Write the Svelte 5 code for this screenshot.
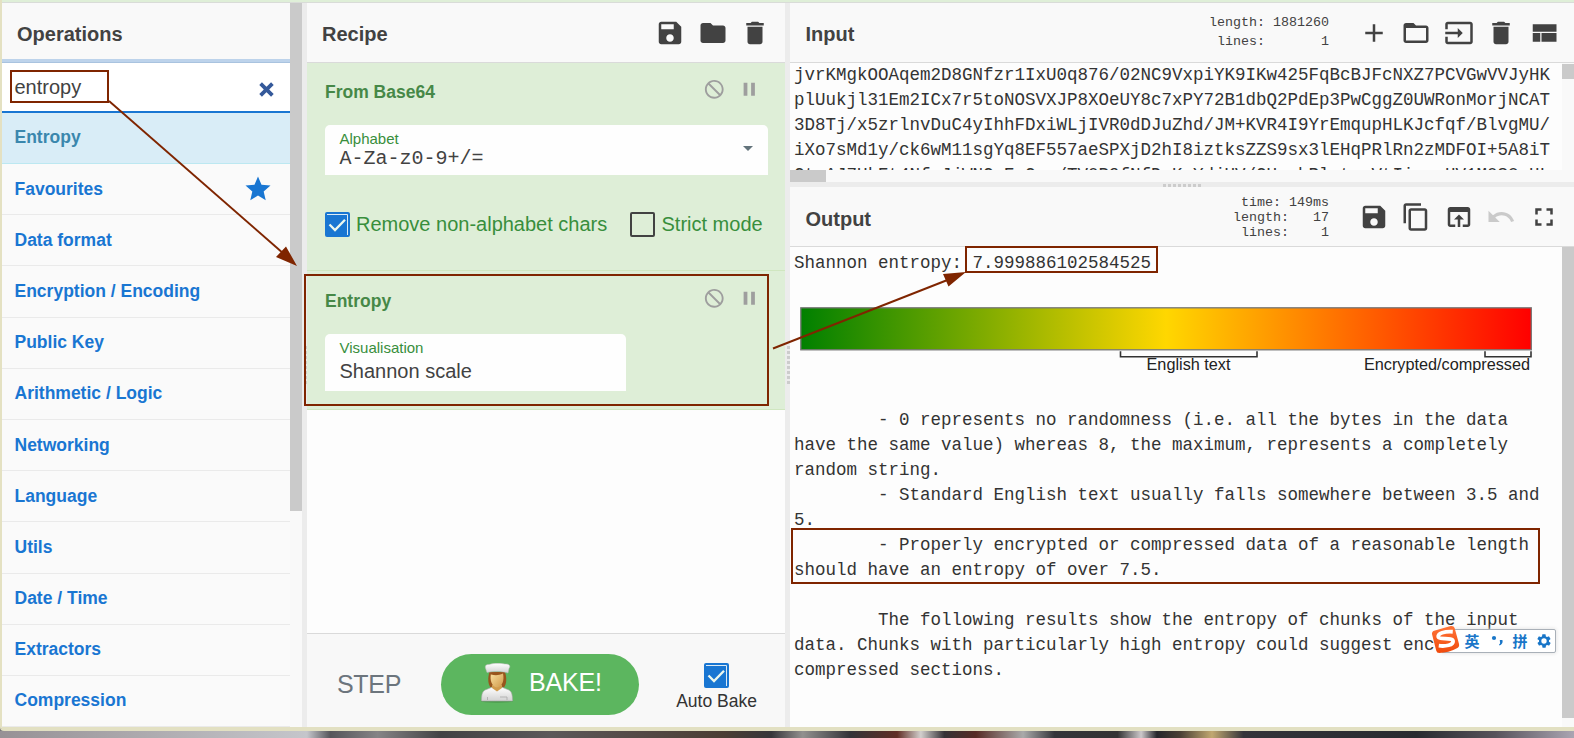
<script>
  const icons = {
    save: 'M17 3H5c-1.11 0-2 .9-2 2v14c0 1.1.89 2 2 2h14c1.1 0 2-.9 2-2V7l-4-4zm-5 16c-1.66 0-3-1.34-3-3s1.34-3 3-3 3 1.34 3 3-1.34 3-3 3zm3-10H5V5h10v4z',
    folder: 'M10 4H4c-1.1 0-1.99.9-1.99 2L2 18c0 1.1.9 2 2 2h16c1.1 0 2-.9 2-2V8c0-1.1-.9-2-2-2h-8l-2-2z',
    open: 'M20 6h-8l-2-2H4c-1.1 0-1.99.9-1.99 2L2 18c0 1.1.9 2 2 2h16c1.1 0 2-.9 2-2V8c0-1.1-.9-2-2-2zm0 12H4V8h16v10z',
    trash: 'M6 19c0 1.1.9 2 2 2h8c1.1 0 2-.9 2-2V7H6v12zM19 4h-3.5l-1-1h-5l-1 1H5v2h14V4z',
    add: 'M19 13h-6v6h-2v-6H5v-2h6V5h2v6h6v2z',
    input: 'M21 3.01H3c-1.1 0-2 .9-2 2V9h2V4.99h18v14.03H3V15H1v4.01c0 1.1.9 1.98 2 1.98h18c1.1 0 2-.88 2-1.98v-14c0-1.11-.9-2-2-2zM11 16l4-4-4-4v3H1v2h10v3z',
    view: 'M3 19h6v-7H3v7zm7 0h12v-7H10v7zM3 5v6h19V5H3z',
    copy: 'M16 1H4c-1.1 0-2 .9-2 2v14h2V3h12V1zm3 4H8c-1.1 0-2 .9-2 2v14c0 1.1.9 2 2 2h11c1.1 0 2-.9 2-2V7c0-1.1-.9-2-2-2zm0 16H8V7h11v14z',
    browser: 'M19 4H5c-1.11 0-2 .9-2 2v12c0 1.1.89 2 2 2h4v-2H5V8h14v10h-4v2h4c1.1 0 2-.9 2-2V6c0-1.1-.89-2-2-2zm-7 6l-4 4h3v6h2v-6h3l-4-4z',
    undo: 'M12.5 8c-2.65 0-5.05.99-6.9 2.6L2 7v9h9l-3.62-3.62c1.39-1.16 3.16-1.88 5.12-1.88 3.54 0 6.55 2.31 7.6 5.5l2.37-.78C21.08 11.03 17.15 8 12.5 8z',
    full: 'M7 14H5v5h5v-2H7v-3zm-2-4h2V7h3V5H5v5zm12 7h-3v2h5v-5h-2v3zM14 5v2h3v3h2V5h-5z',
    ban: 'M12 2C6.48 2 2 6.48 2 12s4.48 10 10 10 10-4.48 10-10S17.52 2 12 2zm0 18c-4.42 0-8-3.58-8-8 0-1.85.63-3.55 1.69-4.9L16.9 18.31C15.55 19.37 13.85 20 12 20zm6.31-3.1L7.1 5.69C8.45 4.63 10.15 4 12 4c4.42 0 8 3.58 8 8 0 1.85-.63 3.55-1.69 4.9z',
    pause: 'M6 19h4V5H6v14zm8-14v14h4V5h-4z',
    star: 'M12 17.27L18.18 21l-1.64-7.03L22 9.24l-7.19-.61L12 2 9.19 8.63 2 9.24l5.46 4.73L5.82 21z',
    gear: 'M19.4 13c0-.3.1-.6.1-1s0-.7-.1-1l2.1-1.600c.2-.2.3-.5.1-.7l-2-3.400c-.1-.2-.4-.3-.6-.2l-2.500 1c-.5-.4-1.100-.7-1.700-1l-.4-2.600c0-.3-.2-.5-.5-.5h-4c-.3 0-.5.2-.5.5l-.4 2.600c-.6.3-1.200.6-1.700 1l-2.500-1c-.2-.1-.5 0-.6.2l-2 3.400c-.1.2-.1.500.1.700L4.600 11c0 .3-.1.6-.1 1s0 .7.1 1l-2.100 1.600c-.2.2-.2.500-.1.700l2 3.400c.1.2.4.3.6.2l2.500-1c.5.4 1.100.7 1.700 1l.4 2.600c0 .3.2.5.5.5h4c.3 0 .5-.2.5-.5l.4-2.600c.6-.3 1.200-.6 1.700-1l2.500 1c.2.1.5 0 .6-.2l2-3.400c.1-.2.1-.5-.1-.7L19.400 13zM12 16a4 4 0 1 1 0-8 4 4 0 0 1 0 8z'
  };
  const categories = ['Favourites', 'Data format', 'Encryption / Encoding', 'Public Key', 'Arithmetic / Logic', 'Networking', 'Language', 'Utils', 'Date / Time', 'Extractors', 'Compression'];
  const inputText = [
    'jvrKMgkOOAqem2D8GNfzr1IxU0q876/02NC9VxpiYK9IKw425FqBcBJFcNXZ7PCVGwVVJyHK',
    'plUukjl31Em2ICx7r5toNOSVXJP8XOeUY8c7xPY72B1dbQ2PdEp3PwCggZ0UWRonMorjNCAT',
    '3D8Tj/x5zrlnvDuC4yIhhFDxiWLjIVR0dDJuZhd/JM+KVR4I9YrEmqupHLKJcfqf/BlvgMU/',
    'iXo7sMd1y/ck6wM11sgYq8EF557aeSPXjD2hI8iztksZZS9sx3lEHqPRlRn2zMDFOI+5A8iT',
    'CtaAJ7UkEt4NfoJjWNCoEnCss/TV0B9fNfDoKsYdjUV/CUsshRlstssVtIisssHV1M0S8sHL'
  ].join('\n');
  const explanation = `        - 0 represents no randomness (i.e. all the bytes in the data
have the same value) whereas 8, the maximum, represents a completely
random string.
        - Standard English text usually falls somewhere between 3.5 and
5.
        - Properly encrypted or compressed data of a reasonable length
should have an entropy of over 7.5.

        The following results show the entropy of chunks of the input
data. Chunks with particularly high entropy could suggest enc
compressed sections.`;
  const inputStats = 'length: 1881260\nlines:       1';
  const outputStats = 'time: 149ms\nlength:   17\nlines:    1';
</script>

{#snippet icon(name, cls = '')}
  <svg class="icon {cls}" viewBox="0 0 24 24"><path d={icons[name]} /></svg>
{/snippet}

{#snippet check()}
  <svg class="check" viewBox="0 0 25 25">
    <rect width="25" height="25" rx="2" fill="#1976d2" />
    <path d="M2 2.500H22.500V23" fill="none" stroke="#dcebf5" stroke-width="1" />
    <path d="M4.500 12.500L10 18L20 7.800" fill="none" stroke="#edf8ee" stroke-width="2.300" />
  </svg>
{/snippet}

<div class="page">
  <main class="window">
    <div class="banner"></div>
    <div class="workspace">
      <section class="operations">
        <div class="ops-main">
          <header class="ops-title">Operations</header>
          <div class="search">
            <span>entropy</span>
            <svg viewBox="0 0 14 14"><path d="M1.500 1.500L12.500 12.500M12.500 1.500L1.500 12.500" stroke="#34599a" stroke-width="3.500" /></svg>
          </div>
          <div class="row match">Entropy</div>
          {#each categories as c, i}
            <div class="row">
              {c}
              {#if i === 0}{@render icon('star', 'star')}{/if}
            </div>
          {/each}
        </div>
        <div class="scroll-v"><div class="thumb ops-thumb"></div></div>
      </section>

      <div class="split-v"><i></i></div>

      <section class="recipe">
        <header>
          <h2>Recipe</h2>
          <div class="tools">{@render icon('save')}{@render icon('folder')}{@render icon('trash')}</div>
        </header>
        <div class="op first">
          <div class="op-head"><b>From Base64</b>{@render icon('ban', 'small')}{@render icon('pause', 'small')}</div>
          <div class="field alphabet">
            <label for="a">Alphabet</label>
            <span class="mono">A-Za-z0-9+/=</span>
            <i class="caret"></i>
          </div>
          <div class="checks">
            {@render check()}<span class="remove">Remove non-alphabet chars</span>
            <i class="box"></i><span>Strict mode</span>
          </div>
        </div>
        <div class="op second">
          <div class="op-head"><b>Entropy</b>{@render icon('ban', 'small')}{@render icon('pause', 'small')}</div>
          <div class="field visual">
            <label for="v">Visualisation</label>
            <span>Shannon scale</span>
          </div>
        </div>
        <div class="empty"></div>
        <footer>
          <span class="step">STEP</span>
          <div class="bake">
            <svg viewBox="0 0 34 40">
              <defs>
                <linearGradient id="coat" x1="0" y1="0" x2="0" y2="1"><stop offset="0" stop-color="#fff" /><stop offset="1" stop-color="#d2d2d2" /></linearGradient>
                <linearGradient id="face" x1="0" y1="0" x2="1" y2="1"><stop offset="0" stop-color="#fae0a0" /><stop offset="1" stop-color="#cf9848" /></linearGradient>
              </defs>
              <ellipse cx="17" cy="38.300" rx="16" ry="1.500" fill="#397f3a" opacity=".5" />
              <path d="M9.500 9h15.500c2 6 1.500 12-1 15.500H10.500C8 21 7.500 15 9.500 9z" fill="#98551d" />
              <path d="M1.500 38c0-7 1-10.500 5-11.500l6-2.500h9l6 2.500c4 1 5 4.500 5 11.500z" fill="url(#coat)" stroke="#aaa" stroke-width=".6" />
              <path d="M12 22h10v3l-5 3.500-5-3.500z" fill="#d19c4d" />
              <path d="M11 11.500c4 1 8 1 12-1 1.500 7-.5 13-6 14-5-1-7.500-7-6-14z" fill="url(#face)" />
              <path d="M7 9.500L5.800 6C4.500 3 6 1 9 1.500c4-1.500 12-1.500 16-.5 4-.5 6 2 4 4.500l-1 4.500c-5-2-15-2-21-.5z" fill="url(#coat)" stroke="#bbb" stroke-width=".5" />
              <path d="M20 34h7M7.500 34v3M27 34v3" stroke="#aaa" stroke-width=".8" />
            </svg>
            <span>BAKE!</span>
          </div>
          <div class="auto">{@render check()}<span>Auto Bake</span></div>
        </footer>
      </section>

      <div class="split-v"><i></i></div>

      <section class="io">
        <header>
          <h2>Input</h2>
          <pre class="stats in">{inputStats}</pre>
          <div class="tools">
            {@render icon('add')}{@render icon('open')}{@render icon('input')}{@render icon('trash')}{@render icon('view')}
          </div>
        </header>
        <div class="input-area">
          <div class="input-row">
            <pre>{inputText}</pre>
            <div class="scroll-v"><div class="thumb in-thumb"></div></div>
          </div>
          <div class="scroll-h"><div></div></div>
        </div>
        <div class="split-h"><i></i></div>
        <header class="out-head">
          <h2>Output</h2>
          <pre class="stats out">{outputStats}</pre>
          <div class="tools">
            {@render icon('save')}{@render icon('copy')}{@render icon('browser')}{@render icon('undo', 'off')}{@render icon('full')}
          </div>
        </header>
        <div class="output-area">
          <div class="output">
            <pre>Shannon entropy: 7.999886102584525</pre>
            <svg class="scale" viewBox="0 0 768 80">
              <defs>
                <linearGradient id="heat"><stop offset="0" stop-color="#008000" /><stop offset=".5" stop-color="#ffd700" /><stop offset="1" stop-color="#f00" /></linearGradient>
              </defs>
              <rect x="10.800" y="11.800" width="730.500" height="42" fill="url(#heat)" stroke="#777" stroke-width="1.300" />
              <path d="M330.500 55.300V60.700H467V55.300M695 55.300V60.700H741V55.300" fill="none" stroke="#333" stroke-width="1.600" />
              <text x="356.500" y="73.700" textLength="84">English text</text>
              <text x="574" y="73.700" textLength="166">Encrypted/compressed</text>
            </svg>
            <pre class="explain">{explanation}</pre>
          </div>
          <div class="scroll-v"><div class="thumb out-thumb"></div></div>
        </div>
      </section>
    </div>
  </main>
  <div class="desktop"></div>

  <div class="ime">
    <svg class="sogou" viewBox="0 0 28 28">
      <defs><linearGradient id="flame" x1="0" y1="0" x2="0" y2="1"><stop offset="0" stop-color="#ff7438" /><stop offset="1" stop-color="#f04a0c" /></linearGradient></defs>
      <path d="M3 5.500L19 1Q22 .5 22.800 3L27 18Q27.800 21 25 22.500Q17 27 8 27Q5.500 27 5 24.500L1 9Q.5 6.500 3 5.500z" fill="url(#flame)" />
      <path d="M21 6.500C13 6 6.500 8 7 11.300C7.500 14.500 21 11.500 21.300 15.500C21.600 19.500 14 20.800 7.500 20" fill="none" stroke="#fff" stroke-width="3.700" />
    </svg>
    <span class="en">英</span>
    <svg class="punct" viewBox="0 0 12 14"><circle cx="3" cy="4" r="2.100" /><path d="M8.800 6h2.600q1 4-2.800 5.500l-.6-1q1.600-1 1-2z" /></svg>
    <span>拼</span>
    {@render icon('gear', 'gear')}
  </div>

  <svg class="notes" viewBox="0 0 1574 738">
    <g fill="none" stroke="#7f2500" stroke-width="2">
      <rect x="11" y="71" width="97" height="31" />
      <rect x="305" y="275" width="463" height="130" />
      <rect x="966" y="247" width="191" height="25" />
      <rect x="792" y="529" width="747" height="54" />
      <path d="M109 101L284 254" stroke-width="1.900" />
      <path d="M773 348.500L950 279" stroke-width="1.900" />
    </g>
    <path d="M297 266L276 257L286 246.500zM966 272L943 274L948.500 286.500z" fill="#7f2500" />
  </svg>
</div>

<style>
  :global(body) { margin: 0; overflow: hidden; }
  .page { position: relative; width: 1574px; height: 738px; overflow: hidden; background: #77767a; font-family: "Liberation Sans", Arial, sans-serif; color: #424242; font-size: 20px; }
  * { box-sizing: border-box; }
  pre, h2 { margin: 0; }
  .window { height: 731px; border-left: 2px solid #e4e1c2; border-bottom: 4px solid #e2e0c2; border-bottom-left-radius: 4px; overflow: hidden; background: #fafafa; }
  .banner { height: 3px; background: #dfefd8; border-bottom: 1px solid #d9dcd8; }
  .workspace { display: flex; height: 724px; }
  .desktop { height: 7px; background: linear-gradient(90deg, #969195 0, #aaa7ab 8%, #c5c6cb 19.500%, #55555a 21%, #858486 24%, #424244 28%, #5c5859 35%, #4b3d34 46%, #36363a 49%, #92918f 51%, #333439 54%, #602e25 57%, #d2cfcd 58.500%, #353236 60%, #562b25 62%, #aaa 65%, #34353a 67%, #333 71%, #ccc8ca 72.500%, #25262b 73.500%, #4a4035 75%, #c1a871 77%, #34343a 79%, #292b30 90%, #57535b 95%, #aaa5b2 100%); }

  .icon { display: block; flex: none; width: 30px; height: 30px; fill: #424242; }
  .icon.small { width: 22.500px; height: 22.500px; fill: #9e9e9e; }
  .icon.off { opacity: .25; }
  header { display: flex; flex: none; align-items: center; height: 60px; border-bottom: 1px solid #dadada; background: #f9f9f9; }
  h2 { flex: 1; padding: 3px 0 0 15px; font-size: 20px; line-height: 24px; }
  .tools { display: flex; gap: 12.500px; padding-top: 1px; }

  .operations { display: flex; flex: none; width: 300px; background: #fafafa; }
  .ops-main { width: 288px; overflow: hidden; }
  .ops-title { height: 59px; padding: 7px 15px 0; font-weight: bold; background: #f9f9f9; border-bottom: 3px solid #bdd3eb; }
  .search { display: flex; align-items: center; justify-content: space-between; height: 51px; padding: 0 16px 0 12.500px; background: #fff; border-bottom: 2px solid #1976d2; border-top: 1px solid #a9c3df; }
  .search svg { width: 15px; height: 15px; margin-top: 4px; }
  .search span { padding-top: 1px; }
  .row { display: flex; align-items: center; justify-content: space-between; height: 51.200px; padding: 0 17px 0 12.500px; border-bottom: 1px solid #eaeaea; color: #1976d2; font-size: 17.500px; font-weight: bold; }
  .row.match { height: 51px; padding-bottom: 2px; color: #3a87ad; background: #d9edf7; border-color: #bce8f1; }
  .star { fill: #1976d2; margin-top: -1px; }
  .icon.star { fill: #1976d2; }
  .scroll-v { flex: none; width: 12px; background: #f9f9f9; }
  .thumb { background: #cacaca; }
  .ops-thumb { height: 508px; }

  .split-v { display: flex; flex: none; align-items: center; justify-content: flex-end; width: 5px; background: #ececec; }
  .split-v i { width: 3px; height: 38px; background: repeating-linear-gradient(#ccc 0 3px, #ececec 3px 5px); }

  .recipe { display: flex; flex: none; flex-direction: column; width: 478px; background: #fdfdfd; }
  .recipe header .tools { padding-right: 15px; }
  .op { flex: none; padding: 0 17px 0 18px; background: #deeed7; border-bottom: 1px solid #d0e6c0; color: #468847; }
  .op.first { height: 208px; }
  .op.second { height: 139px; }
  .op-head { display: flex; align-items: flex-start; padding-top: 15.500px; height: 62px; font-size: 17.500px; }
  .second .op-head { height: 63px; padding-top: 16.500px; }
  .op-head b { flex: 1; line-height: 26px; }
  .op-head .icon { margin-top: -.5px; }
  .op-head .icon + .icon { margin: -.5px 7.500px 0 12.200px; }
  .field { position: relative; display: flex; flex-direction: column; padding-left: 14.500px; background: #fefefe; border-radius: 5px 5px 0 0; color: #424242; }
  .field label { font-size: 15px; line-height: 18px; color: #388e3c; }
  .alphabet { height: 50px; padding-top: 5px; }
  .alphabet span { line-height: 22px; }
  .mono { font-family: "Liberation Mono", monospace; }
  .caret { position: absolute; right: 15px; top: 21px; border: 5.500px solid transparent; border-top-color: #63737b; border-bottom: 0; }
  .visual { width: 301px; height: 57px; padding-top: 5px; }
  .visual span { line-height: 28px; }
  .checks { display: flex; align-items: center; padding-top: 36px; color: #388e3c; }
  .check { display: block; flex: none; width: 25px; height: 25px; }
  .checks span { margin-left: 6px; padding-top: 1px; line-height: 25px; }
  .checks .remove { width: 250px; margin-right: 24px; white-space: nowrap; }
  .checks .box { width: 25px; height: 25px; border: 2px solid #424242; border-radius: 2px; }
  .checks .box + span { margin-left: 6.500px; }
  .empty { flex: 1; }
  footer { display: flex; flex: none; height: 94px; border-top: 1px solid #dadada; background: #f8f8f8; }
  .step { flex: none; width: 134px; padding: 36px 0 0 30px; font-size: 25px; line-height: 29px; letter-spacing: -.3px; color: #6c757d; }
  .bake { display: flex; flex: none; width: 198px; height: 61px; margin-top: 20px; padding-left: 39px; border-radius: 31px; background: #5cb65f; color: #fff; font-size: 25px; }
  .bake svg { width: 34px; height: 40px; margin-top: 9px; }
  .bake span { margin-left: 15px; margin-top: 14px; line-height: 29px; letter-spacing: -.2px; }
  .auto { display: flex; flex: 1; flex-direction: column; align-items: center; padding: 29px 0 0 9px; color: #333; font-size: 17.500px; line-height: 27px; white-space: nowrap; }

  .io { display: flex; flex: 1; flex-direction: column; min-width: 0; background: #fdfdfd; }
  .io h2 { padding-left: 15.500px; }
  .io .tools { padding-right: 15.500px; }
  .io pre { font-family: "Liberation Mono", monospace; }
  .io .stats { padding-right: 29.500px; font-size: 13.330px; text-align: right; line-height: 19px; }
  .io .stats.in { margin-top: -2px; }
  .io .stats.out { padding-top: 1px; line-height: 15px; }
  .input-area { height: 119px; }
  .input-row { display: flex; height: 107px; }
  .input-row pre { flex: 1; padding-left: 4px; overflow: hidden; font-size: 17.500px; line-height: 25px; color: #333; }
  .in-thumb { height: 15px; margin-top: 1px; }
  .scroll-h { height: 12px; background: #f9f9f9; }
  .scroll-h div { width: 36px; height: 12px; background: #cacaca; }
  .split-h { display: flex; flex: none; align-items: flex-end; justify-content: center; height: 5px; background: #ececec; }
  .split-h i { width: 38px; height: 3px; background: repeating-linear-gradient(90deg, #ccc 0 3px, #ececec 3px 5px); }
  .out-head { height: 60px; }
  .out-head h2 { padding-top: 5px; }
  .output-area { display: flex; flex: 1; min-height: 0; }
  .output { flex: 1; padding-top: 4px; overflow: hidden; }
  .output pre { padding-left: 4px; font-size: 17.500px; line-height: 25px; color: #333; }
  .scale { display: block; width: 768px; height: 80px; margin-top: 20px; }
  .scale text { font: 16.250px "Liberation Sans", Arial, sans-serif; fill: #222; }
  .explain { padding-top: 32px; }
  .out-thumb { height: 471px; }

  .ime { position: absolute; left: 1441px; top: 629px; display: flex; align-items: center; width: 115px; height: 24px; padding-left: 22.500px; border: 1px solid #a9b0b8; border-radius: 2px; background: #fff; box-shadow: 0 0 4px #ddd; color: #1976c8; font: bold 15px "Noto Sans CJK SC", sans-serif; }
  .sogou { position: absolute; left: -11px; top: -5px; width: 29px; height: 29px; }
  .ime span { width: 15px; line-height: 22px; }
  .punct { width: 12px; height: 14px; margin: 0 10px 0 11px; fill: #1976c8; }
  .icon.gear { width: 16px; height: 16px; margin-left: 8px; fill: #1976c8; }
  .notes { position: absolute; inset: 0; width: 1574px; height: 738px; pointer-events: none; }
</style>
